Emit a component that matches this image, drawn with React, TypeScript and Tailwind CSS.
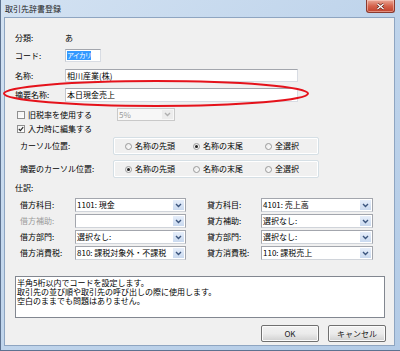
import type { ReactNode } from "react";

function Label({ children, className = "" }: { children: ReactNode; className?: string }) {
  return <span className={`text-[8px] leading-none whitespace-nowrap ${className}`}>{children}</span>;
}

function TextBox({ w, children }: { w: string; children?: ReactNode }) {
  return (
    <div
      className={`flex h-full items-center overflow-hidden border border-[#d8dce3] border-t-[#a3a6ad] border-l-[#c4c8cf] bg-white pl-[1px] text-[8px] leading-none whitespace-nowrap ${w}`}
    >
      {children}
    </div>
  );
}

function Combo({ w, value, disabled = false }: { w: string; value: string; disabled?: boolean }) {
  return (
    <div
      className={`flex h-full ${w} border ${
        disabled ? "border-[#c9c9c9] bg-[#f7f7f7] text-[#9a9a9a]" : "border-[#a3a6ad] border-b-[#d0d4da] bg-white text-black"
      }`}
    >
      <div className="flex flex-1 items-center overflow-hidden pl-[1px] text-[8px] leading-none whitespace-nowrap">
        {value}
      </div>
      <div
        className={`my-[1px] mr-[1px] flex w-[11px] items-center justify-center ${
          disabled ? "bg-[#ececec]" : "bg-gradient-to-b from-[#e6eefa] to-[#c9d9ef]"
        }`}
      >
        <svg width="7" height="5" viewBox="0 0 7 5">
          <path d="M1 1 L3.5 3.5 L6 1" stroke={disabled ? "#b0b0b0" : "#3b557e"} strokeWidth="1.4" fill="none" />
        </svg>
      </div>
    </div>
  );
}

function Check({ checked, label }: { checked: boolean; label: string }) {
  return (
    <div className="flex items-center gap-[3px]">
      <div className="flex h-[8px] w-[8px] items-center justify-center border border-[#8f8f8f] bg-gradient-to-br from-[#f2f2f2] to-white">
        {checked && (
          <svg width="6" height="6" viewBox="0 0 6 6">
            <path d="M0.8 3 L2.4 4.6 L5.2 1.2" stroke="#2a2a2a" strokeWidth="1.2" fill="none" />
          </svg>
        )}
      </div>
      <Label>{label}</Label>
    </div>
  );
}

function Radio({ checked, label, w }: { checked: boolean; label: string; w: string }) {
  return (
    <div className={`flex items-center gap-[3px] ${w}`}>
      <div className="flex h-[7px] w-[7px] items-center justify-center rounded-full border border-[#9a9a9a] bg-gradient-to-br from-[#e8e8e8] to-white">
        {checked && <div className="h-[3px] w-[3px] rounded-full bg-[#202020]" />}
      </div>
      <Label>{label}</Label>
    </div>
  );
}

function CursorGroup({ first }: { first: boolean }) {
  return (
    <div className="flex h-full w-[206px] items-center rounded-[2px] border border-[#d5dfe5] pl-[11px] shadow-[inset_0_0_0_1px_#ffffff]">
      <Radio checked={first} label="名称の先頭" w="w-[68px]" />
      <Radio checked={!first} label="名称の末尾" w="w-[72px]" />
      <Radio checked={false} label="全選択" w="w-[50px]" />
    </div>
  );
}

function Button({ children }: { children: ReactNode }) {
  return (
    <div className="flex h-[17px] w-[58px] items-center justify-center rounded-[2px] border border-[#707070] bg-gradient-to-b from-[#f2f2f2] via-[#ebebeb] to-[#d0d0d0] text-[8px] leading-none font-normal text-[#1a1a1a] shadow-[inset_0_0_0_1px_#fbfbfb]">
      {children}
    </div>
  );
}

const rows = [
  { l: "借方科目:", lv: "1101: 現金", r: "貸方科目:", rv: "4101: 売上高", dim: false },
  { l: "借方補助:", lv: "", r: "貸方補助:", rv: "選択なし:", dim: true },
  { l: "借方部門:", lv: "選択なし:", r: "貸方部門:", rv: "選択なし:", dim: false },
  { l: "借方消費税:", lv: "810: 課税対象外・不課税", r: "貸方消費税:", rv: "110: 課税売上", dim: false },
];

export default function App() {
  return (
    <div className="relative h-[351px] w-[400px] overflow-hidden border-b border-l border-[#5d7290] bg-gradient-to-br from-[#d3e2f2] via-[#bfd4eb] to-[#b3cbe6] pt-0 pr-[5px] pb-[4px] pl-[3px] font-['Noto_Sans_CJK_JP','Noto_Sans',sans-serif] text-black">
      {/* title bar */}
      <div className="flex h-[17px] items-center pl-[1px]">
        <span className="text-[8px] leading-none text-[#222]">取引先辞書登録</span>
      </div>
      <div className="absolute top-0 right-[5px] flex h-[13px] w-[29px] items-center justify-center rounded-b-[3px] border border-t-0 border-[#8a3a2e] bg-gradient-to-b from-[#e9a898] via-[#d5634c] to-[#c0402a] shadow-[inset_0_0_0_1px_rgba(255,220,210,0.5)]">
        <svg width="9" height="7" viewBox="0 0 9 7">
          <path d="M1.5 1 L7.5 6 M7.5 1 L1.5 6" stroke="#5a1f16" strokeWidth="2.6" />
          <path d="M1.5 1 L7.5 6 M7.5 1 L1.5 6" stroke="#ffffff" strokeWidth="1.4" />
        </svg>
      </div>

      {/* client area */}
      <div className="flex h-[329px] w-[391px] flex-col border border-[#8ea5c1] bg-[#f0f0f0]">
        <div className="mt-[13px] flex h-[13px] items-center pl-[10px]">
          <Label className="w-[50px]">分類:</Label>
          <Label>あ</Label>
        </div>
        <div className="mt-[5px] flex h-[13px] items-center pl-[10px]">
          <Label className="w-[50px]">コード:</Label>
          <TextBox w="w-[36px]">
            <span className="bg-[#3399ff] py-[1px] text-[7px] tracking-[-1px] text-white">アイカリ</span>
          </TextBox>
        </div>
        <div className="mt-[7px] flex h-[13px] items-center pl-[10px]">
          <Label className="w-[50px]">名称:</Label>
          <TextBox w="w-[233px]">相川産業(株)</TextBox>
        </div>
        <div className="mt-[6px] flex h-[14px] items-center pl-[10px]">
          <Label className="w-[50px]">摘要名称:</Label>
          <TextBox w="w-[233px]">本日現金売上</TextBox>
        </div>
        <div className="mt-[6px] flex h-[13px] items-center pl-[12px]">
          <div className="w-[100px]">
            <Check checked={false} label="旧税率を使用する" />
          </div>
          <Combo w="w-[58px]" value="5%" disabled />
        </div>
        <div className="mt-[3px] flex h-[10px] items-center pl-[12px]">
          <Check checked label="入力時に編集する" />
        </div>
        <div className="mt-[3px] flex h-[18px] items-center pl-[15px]">
          <Label className="w-[93px]">カーソル位置:</Label>
          <CursorGroup first={false} />
        </div>
        <div className="mt-[5px] flex h-[18px] items-center pl-[15px]">
          <Label className="w-[93px]">摘要のカーソル位置:</Label>
          <CursorGroup first />
        </div>
        <div className="mt-[5px] flex h-[10px] items-center pl-[10px]">
          <Label>仕訳:</Label>
        </div>
        <div className="mt-[5px] flex flex-col gap-[2px] pl-[15px]">
          {rows.map((r) => (
            <div key={r.l} className="flex h-[14px] items-center">
              <Label className={`w-[55px] ${r.dim ? "text-[#9b9b9b]" : ""}`}>{r.l}</Label>
              <Combo w="w-[111px]" value={r.lv} />
              <Label className="ml-[21px] w-[54px]">{r.r}</Label>
              <Combo w="w-[112px]" value={r.rv} />
            </div>
          ))}
        </div>
        <div className="mt-[16px] ml-[10px] h-[42px] w-[370px] border border-[#828790] bg-white pt-[1px] pl-[1px] text-[8px] leading-[9px] whitespace-nowrap">
          <div>半角5桁以内でコードを設定します。</div>
          <div>取引先の並び順や取引先の呼び出しの際に使用します。</div>
          <div>空白のままでも問題はありません。</div>
        </div>
        <div className="mt-[7px] flex justify-end gap-[9px] pr-[8px]">
          <Button>OK</Button>
          <Button>キャンセル</Button>
        </div>
      </div>

      {/* annotation ellipse */}
      <svg className="pointer-events-none absolute top-0 left-0" width="400" height="351">
        <ellipse cx="155" cy="93.5" rx="152" ry="12.5" stroke="#e5121b" strokeWidth="2" fill="none" />
      </svg>
    </div>
  );
}
